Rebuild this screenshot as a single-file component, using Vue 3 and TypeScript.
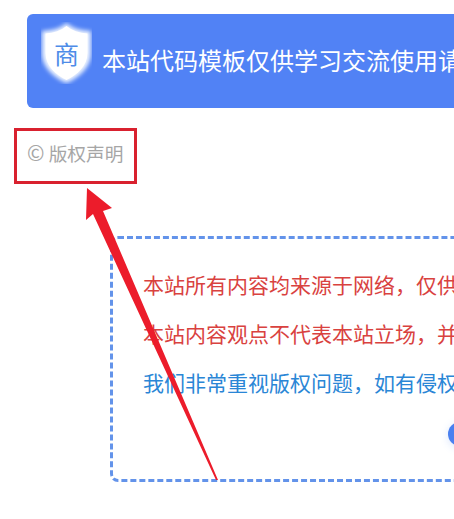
<script setup lang="ts">
interface Line { text: string; tone: string }
const lines: Line[] = [
  { text: '本站所有内容均来源于网络，仅供学习交流使用', tone: 'red' },
  { text: '本站内容观点不代表本站立场，并不代表本站赞同', tone: 'red' },
  { text: '我们非常重视版权问题，如有侵权请联系我们删除', tone: 'blue' },
]
</script>

<template>
  <div class="page">
    <div class="banner">
      <svg class="shield" viewBox="0 0 51 62" aria-hidden="true">
        <defs>
          <filter id="glow" x="-30%" y="-30%" width="160%" height="160%">
            <feGaussianBlur stdDeviation="2.2" />
          </filter>
        </defs>
        <path class="halo" d="M25.500 1 C31 6 38 8.500 50 9 V31 C50 46 37 56 25.500 61 C14 56 1 46 1 31 V9 C13 8.500 20 6 25.500 1Z" filter="url(#glow)" />
        <path class="body" d="M25.500 4 C31 8.500 38 11 46.500 11.500 V31 C46.500 44 36 53 25.500 58 C15 53 4.500 44 4.500 31 V11.500 C13 11 20 8.500 25.500 4Z" />
      </svg>
      <span class="shield-char">商</span>
      <span class="banner-text">本站代码模板仅供学习交流使用请勿商用</span>
    </div>

    <div class="notice-title"><span class="copyright">©</span> 版权声明</div>

    <div class="notice">
      <p v-for="line in lines" :key="line.text" class="line" :class="line.tone">{{ line.text }}</p>
      <div class="dot-row"><span class="dot"></span></div>
    </div>

    <div class="highlight"></div>
    <svg class="arrow" viewBox="0 0 454 519" aria-hidden="true">
      <polygon points="87,188 112,208 103,211 218,480 216,480 93,214 86,220" />
    </svg>
  </div>
</template>

<style>
html, body { margin: 0; background: #fff; }
</style>

<style scoped>
.page {
  position: relative;
  width: 454px;
  height: 519px;
  overflow: hidden;
  background: #fff;
  font-family: "Noto Sans CJK SC", "Noto Sans", sans-serif;
}
.banner {
  position: relative;
  display: flex;
  align-items: center;
  box-sizing: border-box;
  width: 620px;
  height: 94px;
  margin: 14px 0 0 27px;
  padding: 0 0 2px 75px;
  border-radius: 6px;
  background: #5182f5;
}
.shield {
  position: absolute;
  left: 14px;
  top: 8px;
  width: 51px;
  height: 62px;
}
.halo { fill: #eef4fe; }
.body { fill: #fff; }
.shield-char {
  position: absolute;
  left: 27px;
  top: 25px;
  font-size: 25px;
  line-height: 28px;
  color: #4e8ce8;
}
.banner-text {
  font-size: 24px;
  line-height: 32px;
  color: #fff;
  white-space: nowrap;
}
.notice-title {
  margin: 32px 0 0 27px;
  font-size: 18.700px;
  line-height: 24px;
  color: #a6a6a6;
  white-space: nowrap;
}
.copyright {
  font-size: 21px;
  line-height: 24px;
}
.notice {
  box-sizing: border-box;
  width: 600px;
  height: 246px;
  margin: 71px 0 0 110px;
  padding: 28px 0 0 30px;
  border: 3px dashed #6393ea;
  border-radius: 8px;
}
.line {
  margin: 0 0 15px;
  font-size: 21px;
  line-height: 34px;
  white-space: nowrap;
}
.red { color: #d9423f; }
.blue { color: #2a86d6; }
.dot-row { margin: 23px 0 0 305px; }
.dot {
  display: block;
  width: 24px;
  height: 24px;
  border-radius: 50%;
  background: #4a80f0;
  box-shadow: 0 2px 8px rgba(74, 128, 240, 0.2);
}
.highlight {
  position: absolute;
  left: 14px;
  top: 128px;
  box-sizing: border-box;
  width: 123px;
  height: 56px;
  border: 3.500px solid #d9212f;
}
.arrow {
  position: absolute;
  left: 0;
  top: 0;
  width: 454px;
  height: 519px;
  pointer-events: none;
}
.arrow polygon { fill: #ec1c2b; }
</style>
